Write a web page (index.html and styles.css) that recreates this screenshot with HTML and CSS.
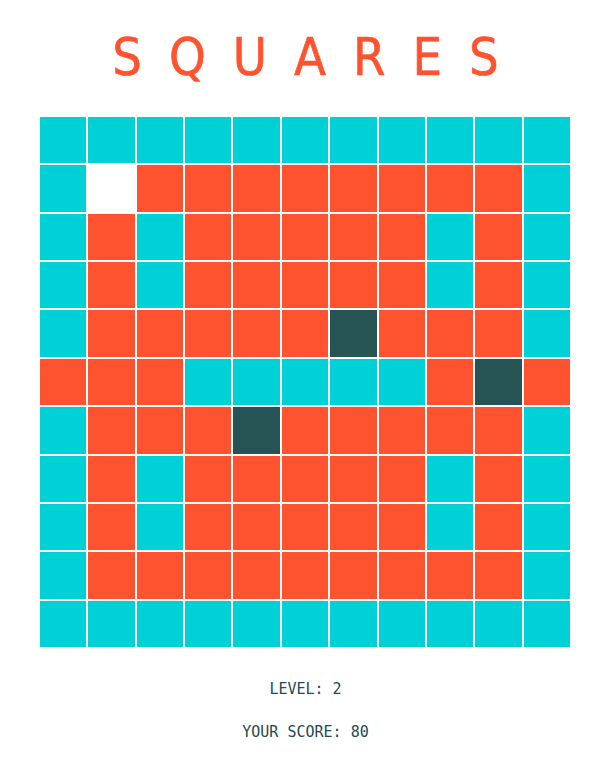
FILE: index.html
```html
<!DOCTYPE html>
<html lang="en">
<head>
    <meta charset="UTF-8">
    <meta name="viewport" content="width=device-width, initial-scale=1.0">
    <title>Squares</title>
    <link rel="stylesheet" href="styles.css">
</head>
<body>
    <div id="game">
        <h1 class="title">SQUARES</h1>

        <!-- Board cells are built by the script below -->
        <div id="board" class="board"></div>

        <div class="stats">
            <p class="stat">LEVEL: <span id="level">2</span></p>
            <p class="stat">YOUR SCORE: <span id="score">80</span></p>
        </div>
    </div>

    <script>
        // t = teal, o = orange, d = dark, w = white (current square)
        const layout = [
            'ttttttttttt',
            'twoooooooot',
            'totoooootot',
            'totoooootot',
            'tooooodooot',
            'oootttttodo',
            'tooodooooot',
            'totoooootot',
            'totoooootot',
            'tooooooooot',
            'ttttttttttt'
        ];

        const names = { t: 'teal', o: 'orange', d: 'dark', w: 'white' };
        const board = document.getElementById('board');

        layout.forEach(function (row) {
            for (let i = 0; i < row.length; i++) {
                const cell = document.createElement('div');
                cell.classList.add('cell', names[row[i]]);
                board.appendChild(cell);
            }
        });
    </script>
</body>
</html>
```

FILE: styles.css
```css
body {
    margin: 0;
    padding: 0;
    background-color: #fff;
    font-family: 'DejaVu Sans Mono', monospace;
    color: #26494f;
}

#game {
    width: 611px;
}

.title {
    margin: 0;
    padding: 31px 0 0 0;
    height: 86px;
    box-sizing: border-box;
    text-align: center;
    font-family: 'DejaVu Sans Condensed', 'DejaVu Sans', sans-serif;
    font-weight: normal;
    font-size: 52px;
    line-height: 52px;
    letter-spacing: 27px;
    text-indent: 27px;
    color: #ff532f;
    -webkit-text-stroke: 0.6px #ff532f;
}

.board {
    width: 530px;
    height: 530px;
    margin-left: 40px;
    margin-top: 31px;
    display: grid;
    grid-template-columns: repeat(11, 1fr);
    grid-template-rows: repeat(11, 1fr);
    gap: 2px;
}

.cell {
    background-color: #00d1d6;
}

.cell.orange {
    background-color: #ff532f;
}

.cell.dark {
    background-color: #265354;
}

.cell.white {
    background-color: #fff;
}

.stats {
    padding-top: 34px;
    text-align: center;
}

.stat {
    margin: 0 0 27px 0;
    font-size: 15px;
    line-height: 16px;
}
```
